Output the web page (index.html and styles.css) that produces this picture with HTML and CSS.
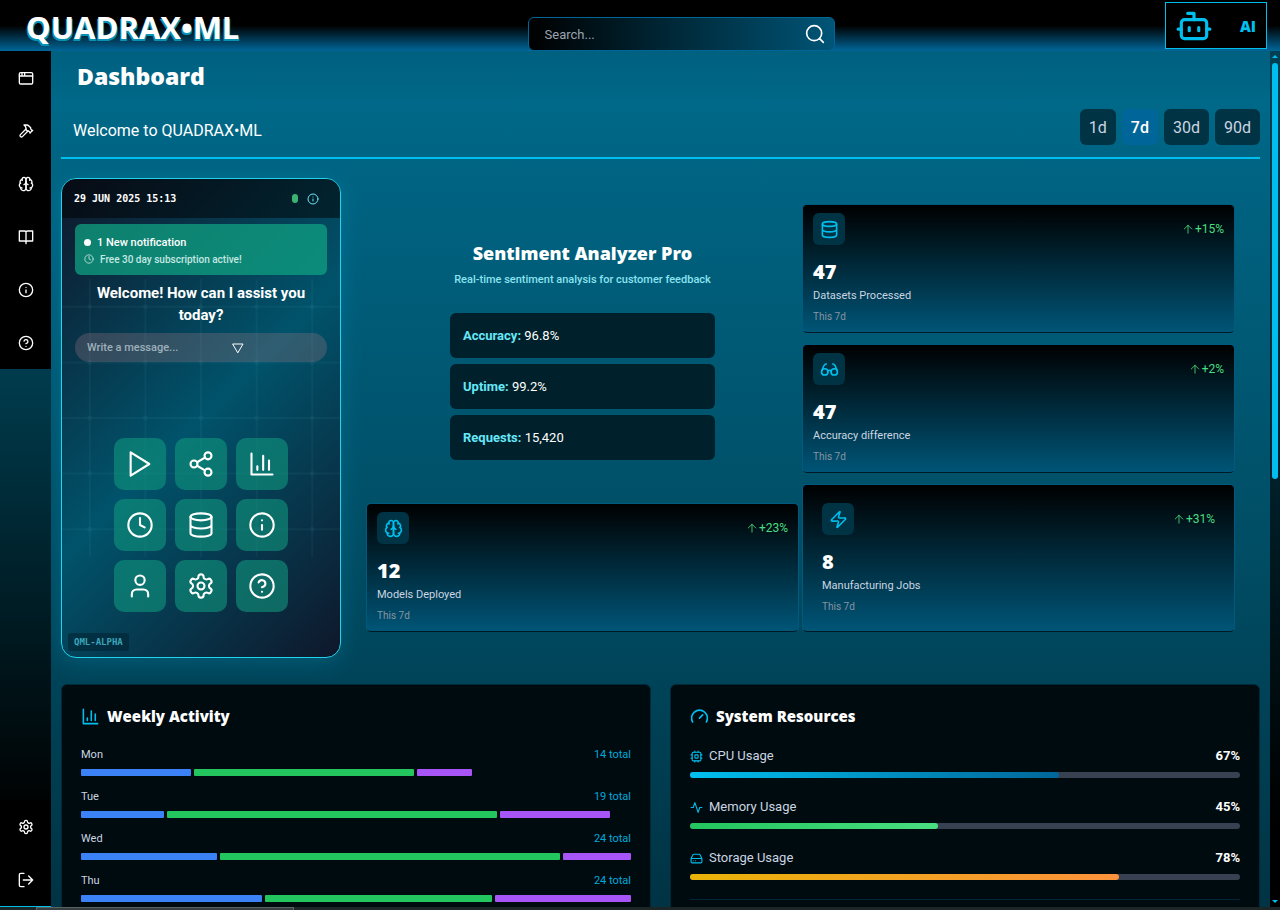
FILE: index.html
```html
<!DOCTYPE html>
<html lang="en">
  <head>
    <meta charset="utf-8">
    <title>QUADRAX•ML - Dashboard</title>
    <meta name="viewport" content="width=device-width, initial-scale=1">
    <link rel="stylesheet" href="styles.css">
  </head>
  <body>
    <svg class="sprite" aria-hidden="true">
      <symbol id="window" viewBox="0 0 24 24"><rect x="2" y="4" width="20" height="17" rx="2"/><path d="M2 9h20M6 4v5M10 4v5"/></symbol>
      <symbol id="hammer" viewBox="0 0 24 24"><path d="m15 12-8.4 8.4a2.1 2.1 0 1 1-3-3L12 9"/><path d="m18 15 4-4"/><path d="m21.500 11.500-1.914-1.914A2 2 0 0 1 19 8.172V7l-2.260-2.260a6 6 0 0 0-4.202-1.756L9 2.960l.92.820A6.180 6.180 0 0 1 12 8.400V10l2 2h1.172a2 2 0 0 1 1.414.586L18.500 14.500"/></symbol>
      <symbol id="brain" viewBox="0 0 24 24"><path d="M12 5a3 3 0 1 0-5.997.125 4 4 0 0 0-2.526 5.770 4 4 0 0 0 .556 6.588A4 4 0 1 0 12 18Z"/><path d="M12 5a3 3 0 1 1 5.997.125 4 4 0 0 1 2.526 5.770 4 4 0 0 1-.556 6.588A4 4 0 1 1 12 18Z"/><path d="M15 13a4.500 4.500 0 0 1-3-4 4.500 4.500 0 0 1-3 4M17.600 6.500a3 3 0 0 0 .4-1.375M6 5.125A3 3 0 0 0 6.400 6.500M3.477 10.900a4 4 0 0 1 .585-.4M19.940 10.500a4 4 0 0 1 .585.4M6 18a4 4 0 0 1-1.967-.516M19.967 17.484A4 4 0 0 1 18 18"/></symbol>
      <symbol id="book" viewBox="0 0 24 24"><path d="M12 5v17M2 3h8a2 2 0 0 1 2 2 2 2 0 0 1 2-2h8v15h-8a2 2 0 0 0-2 2 2 2 0 0 0-2-2H2z"/></symbol>
      <symbol id="info" viewBox="0 0 24 24"><circle cx="12" cy="12" r="10"/><path d="M12 16v-4M12 8h.01"/></symbol>
      <symbol id="help" viewBox="0 0 24 24"><circle cx="12" cy="12" r="10"/><path d="M9.090 9a3 3 0 0 1 5.830 1c0 2-3 3-3 3M12 17h.01"/></symbol>
      <symbol id="settings" viewBox="0 0 24 24"><path d="M12.220 2h-.44a2 2 0 0 0-2 2v.18a2 2 0 0 1-1 1.730l-.43.25a2 2 0 0 1-2 0l-.15-.08a2 2 0 0 0-2.730.73l-.22.38a2 2 0 0 0 .73 2.730l.15.1a2 2 0 0 1 1 1.720v.51a2 2 0 0 1-1 1.740l-.15.09a2 2 0 0 0-.73 2.730l.22.38a2 2 0 0 0 2.730.73l.15-.08a2 2 0 0 1 2 0l.43.25a2 2 0 0 1 1 1.730V20a2 2 0 0 0 2 2h.44a2 2 0 0 0 2-2v-.18a2 2 0 0 1 1-1.730l.43-.25a2 2 0 0 1 2 0l.15.08a2 2 0 0 0 2.730-.73l.22-.39a2 2 0 0 0-.73-2.730l-.15-.08a2 2 0 0 1-1-1.740v-.5a2 2 0 0 1 1-1.740l.15-.09a2 2 0 0 0 .73-2.730l-.22-.38a2 2 0 0 0-2.730-.73l-.15.08a2 2 0 0 1-2 0l-.43-.25a2 2 0 0 1-1-1.730V4a2 2 0 0 0-2-2z"/><circle cx="12" cy="12" r="3"/></symbol>
      <symbol id="logout" viewBox="0 0 24 24"><path d="M9 22H4a2 2 0 0 1-2-2V4a2 2 0 0 1 2-2h5M8 12h14M16 6l6 6-6 6"/></symbol>
      <symbol id="search" viewBox="0 0 24 24"><circle cx="11" cy="11" r="9"/><path d="m22 22-4.500-4.500"/></symbol>
      <symbol id="bot" viewBox="0 0 24 24"><path d="M12 8V4H8"/><rect x="4" y="8" width="16" height="12" rx="2"/><path d="M2 14h2M20 14h2M15 13v2M9 13v2"/></symbol>
      <symbol id="database" viewBox="0 0 24 24"><ellipse cx="12" cy="5" rx="9" ry="3"/><path d="M3 5v14a9 3 0 0 0 18 0V5M3 12a9 3 0 0 0 18 0"/></symbol>
      <symbol id="glasses" viewBox="0 0 24 24"><circle cx="6" cy="15" r="4"/><circle cx="18" cy="15" r="4"/><path d="M14 15a2 2 0 0 0-4 0M2.500 13 5 7c.7-1.300 1.400-2 3-2M21.500 13 19 7c-.7-1.300-1.500-2-3-2"/></symbol>
      <symbol id="zap" viewBox="0 0 24 24"><path d="M4 14a1 1 0 0 1-.78-1.630l9.900-10.200a.5.5 0 0 1 .86.46l-1.920 6.020A1 1 0 0 0 13 10h7a1 1 0 0 1 .78 1.630l-9.900 10.200a.5.5 0 0 1-.86-.46l1.920-6.020A1 1 0 0 0 11 14z"/></symbol>
      <symbol id="up" viewBox="0 0 24 24"><path d="m3 12 9-9 9 9M12 22V3"/></symbol>
      <symbol id="play" viewBox="0 0 24 24"><path d="M4 2 20 12 4 22z"/></symbol>
      <symbol id="share" viewBox="0 0 24 24"><circle cx="18" cy="5" r="3"/><circle cx="6" cy="12" r="3"/><circle cx="18" cy="19" r="3"/><path d="m8.600 13.500 6.800 4M15.400 6.500l-6.800 4"/></symbol>
      <symbol id="chart" viewBox="0 0 24 24"><path d="M3 3v18h18M8 17v-3M13 17V5M18 17V9"/></symbol>
      <symbol id="clock" viewBox="0 0 24 24"><circle cx="12" cy="12" r="10"/><path d="M12 6v6l4 2"/></symbol>
      <symbol id="user" viewBox="0 0 24 24"><circle cx="12" cy="7" r="4"/><path d="M19 21v-2a4 4 0 0 0-4-4H9a4 4 0 0 0-4 4v2"/></symbol>
      <symbol id="gauge" viewBox="0 0 24 24"><path d="m12 14 4-4M3.340 19a10 10 0 1 1 17.320 0"/></symbol>
      <symbol id="cpu" viewBox="0 0 24 24"><rect x="4" y="4" width="16" height="16" rx="2"/><rect x="9" y="9" width="6" height="6" rx="1"/><path d="M15 2v2M15 20v2M2 15h2M2 9h2M20 15h2M20 9h2M9 2v2M9 20v2"/></symbol>
      <symbol id="activity" viewBox="0 0 24 24"><path d="M22 12h-4l-3 9L9 3l-3 9H2"/></symbol>
      <symbol id="drive" viewBox="0 0 24 24"><path d="M22 12H2M5.450 5.110 2 12v6a2 2 0 0 0 2 2h16a2 2 0 0 0 2-2v-6l-3.450-6.890A2 2 0 0 0 16.760 4H7.240a2 2 0 0 0-1.790 1.110zM6 16h.01M10 16h.01"/></symbol>
      <symbol id="send" viewBox="0 0 24 24"><path d="M2 4h20l-10 17z"/></symbol>
    </svg>

    <header class="topbar">
      <a class="logo" href="#">QUADRAX•ML</a>
      <form class="search">
        <input type="search" placeholder="Search..." aria-label="Search">
        <button type="button" aria-label="Search"><svg class="icon"><use href="#search"/></svg></button>
      </form>
      <button type="button" class="ai"><svg class="icon"><use href="#bot"/></svg><span>AI</span></button>
    </header>

    <div class="shell">
      <nav class="sidebar">
        <div class="nav-group">
          <a href="#" aria-label="Dashboard"><svg class="icon"><use href="#window"/></svg></a>
          <a href="#" aria-label="Build"><svg class="icon"><use href="#hammer"/></svg></a>
          <a href="#" aria-label="Models"><svg class="icon"><use href="#brain"/></svg></a>
          <a href="#" aria-label="Docs"><svg class="icon"><use href="#book"/></svg></a>
          <a href="#" aria-label="About"><svg class="icon"><use href="#info"/></svg></a>
          <a href="#" aria-label="Help"><svg class="icon"><use href="#help"/></svg></a>
        </div>
        <div class="nav-group nav-bottom">
          <a href="#" aria-label="Settings"><svg class="icon"><use href="#settings"/></svg></a>
          <a href="#" aria-label="Log out"><svg class="icon"><use href="#logout"/></svg></a>
        </div>
      </nav>

      <main>
        <h1>Dashboard</h1>
        <div class="welcome">
          <p>Welcome to QUADRAX•ML</p>
          <div class="ranges">
            <button type="button">1d</button>
            <button type="button" class="active">7d</button>
            <button type="button">30d</button>
            <button type="button">90d</button>
          </div>
        </div>

        <div class="overview">
          <section class="phone">
            <svg class="mesh" viewBox="0 0 280 280" preserveAspectRatio="none" aria-hidden="true">
              <path d="M28 0v280M84 0v280M140 0v280M196 0v280M252 0v280M0 28h280M0 84h280M0 140h280M0 196h280M0 252h280"/>
              <path class="nodes" d="M28 28h0M84 28h0M140 28h0M196 28h0M252 28h0M28 84h0M84 84h0M140 84h0M196 84h0M252 84h0M28 140h0M84 140h0M140 140h0M196 140h0M252 140h0M28 196h0M84 196h0M140 196h0M196 196h0M252 196h0M28 252h0M84 252h0M140 252h0M196 252h0M252 252h0"/>
            </svg>
            <div class="phone-head">
              <time>29 JUN 2025 15:13</time>
              <span class="battery"></span>
              <svg class="icon"><use href="#info"/></svg>
            </div>
            <div class="phone-body">
              <div class="notice">
                <p><i class="dot"></i>1 New notification</p>
                <p class="sub"><svg class="icon"><use href="#clock"/></svg>Free 30 day subscription active!</p>
              </div>
              <h2>Welcome! How can I assist you today?</h2>
              <div class="message">
                <input type="text" placeholder="Write a message..." aria-label="Message">
                <button type="button" aria-label="Send"><svg class="icon"><use href="#send"/></svg></button>
              </div>
              <div class="apps">
                <button type="button" aria-label="Run"><svg class="icon"><use href="#play"/></svg></button>
                <button type="button" aria-label="Share"><svg class="icon"><use href="#share"/></svg></button>
                <button type="button" aria-label="Charts"><svg class="icon"><use href="#chart"/></svg></button>
                <button type="button" aria-label="History"><svg class="icon"><use href="#clock"/></svg></button>
                <button type="button" aria-label="Data"><svg class="icon"><use href="#database"/></svg></button>
                <button type="button" aria-label="Info"><svg class="icon"><use href="#info"/></svg></button>
                <button type="button" aria-label="Profile"><svg class="icon"><use href="#user"/></svg></button>
                <button type="button" aria-label="Settings"><svg class="icon"><use href="#settings"/></svg></button>
                <button type="button" aria-label="Help"><svg class="icon"><use href="#help"/></svg></button>
              </div>
            </div>
            <span class="version">QML-ALPHA</span>
          </section>

          <div class="stats">
            <div class="stat-col">
              <section class="analyzer">
                <h2>Sentiment Analyzer Pro</h2>
                <p class="tagline">Real-time sentiment analysis for customer feedback</p>
                <p class="metric"><b>Accuracy:</b> 96.8%</p>
                <p class="metric"><b>Uptime:</b> 99.2%</p>
                <p class="metric"><b>Requests:</b> 15,420</p>
              </section>
              <article class="card">
                <div class="card-top"><span class="tile"><svg class="icon"><use href="#brain"/></svg></span><span class="trend"><svg class="icon"><use href="#up"/></svg>+23%</span></div>
                <strong>12</strong>
                <p>Models Deployed</p>
                <small>This 7d</small>
              </article>
            </div>
            <div class="stat-col">
              <article class="card">
                <div class="card-top"><span class="tile"><svg class="icon"><use href="#database"/></svg></span><span class="trend"><svg class="icon"><use href="#up"/></svg>+15%</span></div>
                <strong>47</strong>
                <p>Datasets Processed</p>
                <small>This 7d</small>
              </article>
              <article class="card">
                <div class="card-top"><span class="tile"><svg class="icon"><use href="#glasses"/></svg></span><span class="trend"><svg class="icon"><use href="#up"/></svg>+2%</span></div>
                <strong>47</strong>
                <p>Accuracy difference</p>
                <small>This 7d</small>
              </article>
              <article class="card roomy">
                <div class="card-top"><span class="tile"><svg class="icon"><use href="#zap"/></svg></span><span class="trend"><svg class="icon"><use href="#up"/></svg>+31%</span></div>
                <strong>8</strong>
                <p>Manufacturing Jobs</p>
                <small>This 7d</small>
              </article>
            </div>
          </div>
        </div>

        <div class="panels">
          <section class="panel">
            <h3><svg class="icon"><use href="#chart"/></svg>Weekly Activity</h3>
            <div class="day">
              <p>Mon <span>14 total</span></p>
              <div class="bars"><i class="blue" style="width: 20%"></i><i class="green" style="width: 40%"></i><i class="purple" style="width: 10%"></i></div>
            </div>
            <div class="day">
              <p>Tue <span>19 total</span></p>
              <div class="bars"><i class="blue" style="width: 15%"></i><i class="green" style="width: 60%"></i><i class="purple" style="width: 20%"></i></div>
            </div>
            <div class="day">
              <p>Wed <span>24 total</span></p>
              <div class="bars"><i class="blue" style="width: 30%"></i><i class="green" style="width: 75%"></i><i class="purple" style="width: 15%"></i></div>
            </div>
            <div class="day">
              <p>Thu <span>24 total</span></p>
              <div class="bars"><i class="blue" style="width: 40%"></i><i class="green" style="width: 50%"></i><i class="purple" style="width: 30%"></i></div>
            </div>
          </section>
          <section class="panel">
            <h3><svg class="icon"><use href="#gauge"/></svg>System Resources</h3>
            <div class="resource">
              <p><svg class="icon"><use href="#cpu"/></svg>CPU Usage <b>67%</b></p>
              <div class="track"><i class="cpu" style="width: 67%"></i></div>
            </div>
            <div class="resource">
              <p><svg class="icon"><use href="#activity"/></svg>Memory Usage <b>45%</b></p>
              <div class="track"><i class="memory" style="width: 45%"></i></div>
            </div>
            <div class="resource">
              <p><svg class="icon"><use href="#drive"/></svg>Storage Usage <b>78%</b></p>
              <div class="track"><i class="storage" style="width: 78%"></i></div>
            </div>
            <hr>
          </section>
        </div>
      </main>

      <div class="scroller" aria-hidden="true">
        <i class="arrow-up"></i>
        <i class="thumb"></i>
        <i class="arrow-down"></i>
      </div>
    </div>
    <footer class="strip"><i></i></footer>
  </body>
</html>
```
FILE: styles.css
```css
* {
  box-sizing: border-box;
}

body {
  margin: 0;
  height: 100vh;
  display: flex;
  flex-direction: column;
  overflow: hidden;
  background: #000;
  color: #fff;
  font-family: Roboto, "Open Sans", sans-serif;
  font-size: 12px;
}

h1, h2, h3, p {
  margin: 0;
}

button, input {
  font: inherit;
  color: inherit;
  border: none;
  background: none;
  padding: 0;
  margin: 0;
}

a {
  color: inherit;
  text-decoration: none;
}

.sprite {
  position: absolute;
  width: 0;
  height: 0;
}

.icon {
  display: block;
  flex: none;
  width: 16px;
  height: 16px;
  fill: none;
  stroke: currentColor;
  stroke-width: 2;
  stroke-linecap: round;
  stroke-linejoin: round;
}

.logo, .ai, h1, .analyzer h2, .panel h3, .card strong {
  font-family: "Open Sans", Roboto, sans-serif;
  font-weight: 800;
}

/* header */

.topbar {
  flex: none;
  height: 51px;
  display: grid;
  grid-template-columns: 1.16fr 307px 1fr;
  align-items: start;
  padding: 0 13px 0 26px;
  background: linear-gradient(#000 50%, #006699);
}

.logo {
  font-size: 31px;
  line-height: 54px;
  font-weight: 700;
  text-shadow: -1px 2px 0 #0891b2, 1px 2px 0 #0891b2;
}

.search {
  display: flex;
  align-items: center;
  height: 34px;
  margin: 17px 0 0;
  padding: 0 9px 0 16px;
  border: 1px solid #006699;
  border-radius: 6px;
  background: linear-gradient(90deg, #000, #005577);
}

.search input {
  flex: 1;
  min-width: 0;
  font-size: 13px;
  outline: none;
}

.search input::placeholder {
  color: #9ca3af;
}

.search .icon {
  width: 20px;
  height: 20px;
}

.ai {
  justify-self: end;
  display: flex;
  align-items: center;
  justify-content: space-between;
  width: 102px;
  height: 47px;
  margin-top: 2px;
  padding: 0 10px 0 9px;
  border: 1px solid #00bfef;
  background: #000;
  color: #00bfef;
  font-size: 15px;
}

.ai .icon {
  width: 38px;
  height: 38px;
}

/* page frame */

.shell {
  flex: 1;
  min-height: 0;
  display: flex;
  background: linear-gradient(#004055, #00202a 50%, #000 90%);
}

.sidebar {
  flex: none;
  width: 51px;
  display: flex;
  flex-direction: column;
  justify-content: space-between;
  background: linear-gradient(#004458 30%, #000 90%);
}

.nav-group {
  background: #000;
}

.nav-group a {
  display: flex;
  align-items: center;
  justify-content: center;
  height: 53px;
}

.nav-bottom {
  border-bottom: 1px solid #00bfef;
}

main {
  flex: 1;
  min-width: 0;
  overflow: hidden;
  padding: 0 10px;
  background: linear-gradient(#006080, #006888 6%, #004c63 60%, #003344);
}

h1 {
  padding: 9px 16px 0;
  font-size: 23px;
  line-height: 32px;
}

.welcome {
  display: flex;
  align-items: center;
  justify-content: space-between;
  height: 67px;
  padding-left: 12px;
  border-bottom: 2px solid #00bfef;
}

.welcome p {
  font-size: 16px;
  padding-top: 12px;
}

.ranges {
  display: flex;
  gap: 6px;
  padding-top: 5px;
}

.ranges button {
  height: 36px;
  padding: 0 9px;
  border-radius: 6px;
  background: #003344;
  color: #cbd5e1;
  font-size: 16px;
}

.ranges .active {
  background: #006699;
  color: #fff;
  font-weight: 500;
}

/* assistant */

.overview {
  display: flex;
  align-items: flex-start;
  gap: 25px;
  padding: 19px 25px 0 0;
}

.phone {
  position: relative;
  flex: none;
  width: 280px;
  height: 480px;
  border: 1px solid #22d3ee;
  border-radius: 15px;
  overflow: hidden;
  background: linear-gradient(135deg, #0f172a, #00536b 50%, #0f172a);
  box-shadow: 0 4px 24px rgba(0, 190, 240, .2);
}

.mesh {
  position: absolute;
  top: 100px;
  left: 0;
  width: 100%;
  height: 278px;
  fill: none;
  stroke: rgba(120, 200, 220, .06);
  stroke-width: 2;
}

.mesh .nodes {
  stroke-width: 5;
  stroke-linecap: round;
}

.phone-head {
  position: relative;
  display: flex;
  align-items: center;
  gap: 9px;
  height: 39px;
  padding: 0 21px 0 12px;
  background: rgba(0, 0, 0, .5);
}

.phone-head time {
  flex: 1;
  font: 700 10px "DejaVu Sans Mono", monospace;
}

.phone-head .icon {
  width: 12px;
  height: 12px;
  color: #67e8f9;
}

.battery {
  width: 6px;
  height: 9px;
  border-radius: 3px;
  background: #3bb273;
}

.phone-body {
  position: relative;
  padding: 6px 13px;
}

.notice {
  display: flex;
  flex-direction: column;
  justify-content: center;
  height: 51px;
  padding: 2px 9px 0;
  border-radius: 6px;
  background: rgba(16, 160, 130, .75);
  font-size: 11px;
  font-weight: 500;
  line-height: 17px;
}

.notice p {
  display: flex;
  align-items: center;
  gap: 6px;
}

.notice .sub {
  font-size: 10px;
  color: #c5e8e2;
}

.notice .icon {
  width: 10px;
  height: 10px;
}

.dot {
  width: 7px;
  height: 7px;
  border-radius: 50%;
  background: #fff;
}

.phone h2 {
  margin-top: 7px;
  padding: 0 18px;
  font-size: 15px;
  line-height: 22px;
  font-weight: 700;
  text-align: center;
}

.message {
  display: flex;
  align-items: center;
  height: 29px;
  margin-top: 7px;
  padding: 0 12px;
  border-radius: 15px;
  background: rgba(160, 120, 130, .3);
}

.message input {
  width: 145px;
  font-size: 11px;
  font-weight: 500;
  outline: none;
}

.message input::placeholder {
  color: #9fb0ba;
}

.message .icon {
  width: 12px;
  height: 12px;
}

.apps {
  display: grid;
  grid-template-columns: repeat(3, 52px);
  justify-content: center;
  gap: 9px;
  margin-top: 76px;
}

.apps button {
  display: flex;
  align-items: center;
  justify-content: center;
  height: 52px;
  border-radius: 10px;
  background: rgba(16, 150, 125, .6);
}

.apps .icon {
  width: 28px;
  height: 28px;
  stroke-width: 1.8;
}

.version {
  position: absolute;
  left: 6px;
  bottom: 6px;
  padding: 0 6px;
  border-radius: 3px;
  background: rgba(0, 30, 45, .5);
  color: #3ba5b8;
  font: 700 9px/18px "DejaVu Sans Mono", monospace;
}

/* stats */

.stats {
  flex: 1;
  min-width: 0;
  display: grid;
  grid-template-columns: 1fr 1fr;
  gap: 3px;
  padding-top: 26px;
}

.stat-col {
  display: flex;
  flex-direction: column;
  gap: 11px;
}

.analyzer {
  flex: 1;
  align-self: center;
  min-width: 265px;
  padding-top: 35px;
}

.analyzer h2 {
  font-size: 18px;
  line-height: 28px;
  text-align: center;
}

.tagline {
  margin: 5px 0 25px;
  font-size: 11px;
  line-height: 16px;
  font-weight: 500;
  color: #8be3ef;
  text-align: center;
}

.metric {
  height: 45px;
  margin-bottom: 6px;
  padding: 0 13px;
  border-radius: 6px;
  background: #00212b;
  font-size: 13px;
  line-height: 45px;
}

.metric b {
  color: #67e8f9;
}

.card {
  display: flex;
  flex-direction: column;
  height: 129px;
  padding: 8px 10px;
  border: 1px solid #005a80;
  border-bottom-color: #001a26;
  border-radius: 5px;
  background: linear-gradient(#000, #005577);
}

.roomy {
  height: 148px;
  padding: 18px 19px;
}

.card-top {
  display: flex;
  align-items: center;
  justify-content: space-between;
}

.tile {
  display: flex;
  align-items: center;
  justify-content: center;
  width: 32px;
  height: 32px;
  border-radius: 6px;
  background: #003344;
  color: #00bfef;
}

.tile .icon {
  width: 19px;
  height: 19px;
}

.trend {
  display: flex;
  align-items: center;
  gap: 2px;
  color: #4ade80;
}

.trend .icon {
  width: 10px;
  height: 10px;
}

.card strong {
  margin-top: 14px;
  font-size: 20px;
  line-height: 26px;
}

.card p {
  margin-top: 3px;
  line-height: 16px;
  font-size: 11px;
  color: #cbd5e1;
}

.card small {
  margin-top: 6px;
  font-size: 10px;
  line-height: 13px;
  color: #8795a3;
}

/* panels */

.panels {
  display: grid;
  grid-template-columns: 1fr 1fr;
  gap: 19px;
  padding-top: 26px;
}

.panel {
  height: 480px;
  padding: 19px;
  border: 1px solid #002a3a;
  border-radius: 6px;
  background: #000b10;
}

.panel h3 {
  display: flex;
  align-items: center;
  gap: 7px;
  margin-bottom: 18px;
  font-size: 15px;
  line-height: 24px;
}

.panel h3 .icon {
  width: 19px;
  height: 19px;
}

.panel .icon {
  color: #00bfef;
}

.day {
  margin-bottom: 12px;
}

.day p {
  display: flex;
  justify-content: space-between;
  margin-bottom: 5px;
  font-size: 11px;
  line-height: 18px;
  color: #cbd5e1;
}

.day span {
  color: #00a9d8;
}

.bars {
  display: flex;
  gap: 3px;
}

.bars i {
  height: 7px;
  border-radius: 1px;
}

.blue {
  background: #3b82f6;
}

.green {
  background: #22c55e;
}

.purple {
  background: #a855f7;
}

.resource {
  margin-bottom: 19px;
}

.resource p {
  display: flex;
  align-items: center;
  gap: 6px;
  margin-bottom: 6px;
  font-size: 13px;
  line-height: 20px;
  color: #cbd5e1;
}

.resource b {
  margin-left: auto;
  color: #fff;
}

.resource .icon {
  width: 13px;
  height: 13px;
}

.track {
  height: 6px;
  border-radius: 3px;
  background: #374151;
}

.track i {
  display: block;
  height: 6px;
  border-radius: 3px;
}

.cpu {
  background: linear-gradient(90deg, #00bfef, #006699);
}

.memory {
  background: linear-gradient(90deg, #22c55e, #4ade80);
}

.storage {
  background: linear-gradient(90deg, #eab308, #fb923c);
}

.panel hr {
  margin: 0;
  border: none;
  border-top: 1px solid #00263a;
}

/* scrollbar */

.scroller {
  flex: none;
  width: 10px;
  display: flex;
  flex-direction: column;
  align-items: center;
  padding: 4px 0;
}

.arrow-up, .arrow-down {
  border: 3px solid transparent;
}

.arrow-up {
  border-top: none;
  border-bottom-color: #00bfef;
}

.arrow-down {
  border-bottom: none;
  border-top-color: #00bfef;
}

.thumb {
  width: 6px;
  height: 49%;
  margin: 5px 0 auto;
  border-radius: 3px;
  background: #00bfef;
}

.strip {
  flex: none;
  height: 3px;
  padding-left: 36px;
  background: #1c2627;
}

.strip i {
  display: block;
  width: 258px;
  height: 3px;
  border: 1px solid #5a6264;
  border-bottom: none;
  background: #353d3f;
}
```
